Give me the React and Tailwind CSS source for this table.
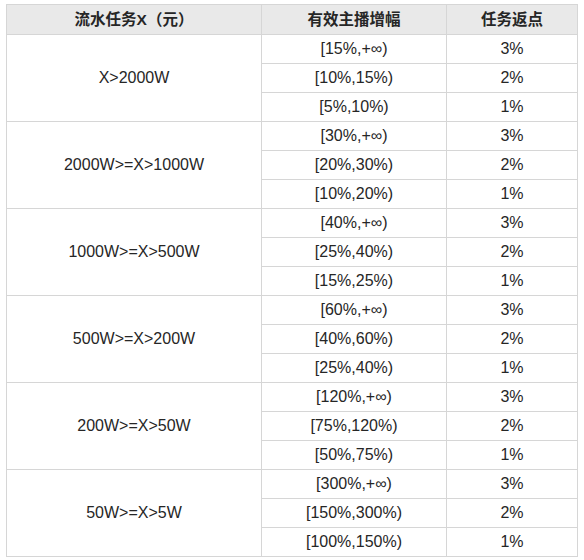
const groups = [
  { label: "X>2000W", ranges: ["[15%,+∞)", "[10%,15%)", "[5%,10%)"] },
  { label: "2000W>=X>1000W", ranges: ["[30%,+∞)", "[20%,30%)", "[10%,20%)"] },
  { label: "1000W>=X>500W", ranges: ["[40%,+∞)", "[25%,40%)", "[15%,25%)"] },
  { label: "500W>=X>200W", ranges: ["[60%,+∞)", "[40%,60%)", "[25%,40%)"] },
  { label: "200W>=X>50W", ranges: ["[120%,+∞)", "[75%,120%)", "[50%,75%)"] },
  { label: "50W>=X>5W", ranges: ["[300%,+∞)", "[150%,300%)", "[100%,150%)"] },
];

const rebates = ["3%", "2%", "1%"];

export default function App() {
  return (
    <div
      className="w-[584px] h-[560px] bg-white pl-[6px] pt-[4px]"
      style={{ fontFamily: '"Liberation Sans", "Noto Sans CJK SC", sans-serif' }}
    >
      <table className="w-[571px] border-collapse text-[16px] text-[#262626] table-fixed">
        <colgroup>
          <col className="w-[255px]" />
          <col className="w-[185px]" />
          <col className="w-[131px]" />
        </colgroup>
        <thead>
          <tr className="h-[30px] bg-[#e9e9e9] text-[15.5px]">
            <th className="border border-[#d6d6d6] font-bold text-center">流水任务X（元）</th>
            <th className="border border-[#d6d6d6] font-bold text-center">有效主播增幅</th>
            <th className="border border-[#d6d6d6] font-bold text-center">任务返点</th>
          </tr>
        </thead>
        <tbody>
          {groups.map((g) =>
            g.ranges.map((r, i) => (
              <tr key={g.label + i} className="h-[29px]">
                {i === 0 && (
                  <td rowSpan={3} className="border border-[#d6d6d6] text-center">
                    {g.label}
                  </td>
                )}
                <td className="border border-[#d6d6d6] text-center">{r}</td>
                <td className="border border-[#d6d6d6] text-center">{rebates[i]}</td>
              </tr>
            ))
          )}
        </tbody>
      </table>
    </div>
  );
}
